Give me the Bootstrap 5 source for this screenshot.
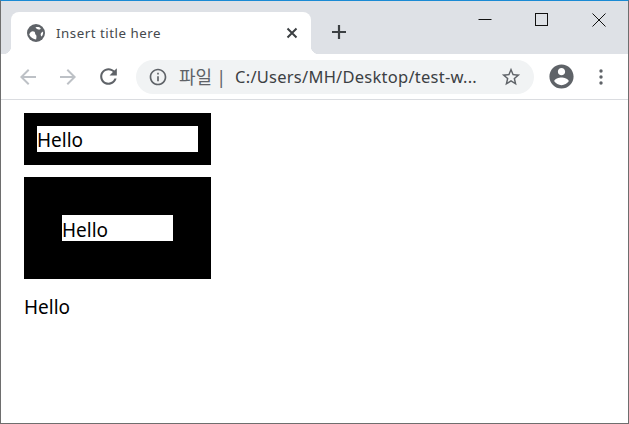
<!DOCTYPE html>
<html lang="ko">
<head>
<meta charset="utf-8">
<title>Insert title here</title>
<link href="https://cdn.jsdelivr.net/npm/bootstrap@5.3.0/dist/css/bootstrap.min.css" rel="stylesheet">
<style>
html,body{height:100%;margin:0;background:#fff;overflow:hidden}
.win-frame{width:629px;height:424px;border:1px solid #6e6e6e;border-top-color:#1a8ad4;font-family:"Noto Sans","Noto Sans CJK KR",sans-serif}
.tab-strip{height:53px;background:#dee1e6;flex:none}
.page-tab{width:300px;height:42px;margin:11px 0 0 10px;background:#fff;border-radius:8px 8px 0 0;position:relative;padding:0 13px 0 16px}
.page-tab::before,.page-tab::after{content:"";position:absolute;bottom:0;width:8px;height:8px}
.page-tab::before{left:-8px;background:radial-gradient(circle at 0 0,transparent 8px,#fff 8.5px)}
.page-tab::after{right:-8px;background:radial-gradient(circle at 100% 0,transparent 8px,#fff 8.5px)}
.tab-name{font-size:13.3px;color:#45494d;margin-left:11px;letter-spacing:.52px;line-height:16px;white-space:nowrap}
.new-tab{margin:10px 0 0 21px;height:42px}
.win-ctl{width:57px;height:24px;margin-top:7px;color:#111}
.win-ctls{margin-right:1px}
.tool-bar{height:46px;border-bottom:1px solid #dadce0;padding-left:7px;flex:none}
.tool-slot{width:40px;height:34px}
.omni{width:398px;height:34px;margin-left:8px;background:#f1f3f4;border-radius:17px;padding:0 12px;margin-top:1px}
.omni-label{font-size:18px;color:#5f6368;margin-left:11px;white-space:nowrap;line-height:20px}
.omni-sep{font-size:18px;color:#5f6368;margin:0 9px 0 4px;line-height:20px}
.omni-url{font-size:16.5px;color:#3c4043;white-space:nowrap;line-height:20px;letter-spacing:.25px}
.prof-slot{width:54px;margin-left:0}
.menu-slot{width:26px}
.page-body{padding:13px 23px;color:#000;font-size:19px;font-family:"Noto Sans",sans-serif}
.black-box{width:187px;background:#000}
.box-one{padding:13px;margin-bottom:12px}
.box-one .white-inner{line-height:28px}
.box-two{padding:38px;margin-bottom:16px}
.box-two .white-inner{line-height:30px}
.white-inner{background:#fff;height:26px}
.plain-hello{height:26px;line-height:24px}
.reload-slot{padding-left:1px}
</style>
</head>
<body>
<div class="win-frame d-flex flex-column">
  <div class="tab-strip d-flex">
    <div class="page-tab d-flex align-items-center">
      <svg width="18" height="18" viewBox="0 0 18 18"><circle cx="9" cy="9" r="9" fill="#5f6368"/><path d="M2.200 10.500C3.500 7 6 6.500 7.500 7.800c1 .9.2 2.200 1.200 3 .9.700 1 1.800.4 4.700-2.500-.3-5.800-2-6.900-5zM8.500 3.500c2-.8 4-.3 5.300.9-.5 1.100-1.800 1.300-2.400 1.100-1-.3-2.300-.8-2.900-2zM16 7.500c.4 1.500 0 3.500-1.300 5-1-.5-1.200-1.800-.9-2.700.3-1 1.300-1.800 2.200-2.300z" fill="#fff"/></svg>
      <span class="tab-name">Insert title here</span>
      <svg class="ms-auto" width="12" height="12" viewBox="0 0 12 12"><path d="M1.500 1.500l9 9M10.500 1.500l-9 9" stroke="#3c4043" stroke-width="2"/></svg>
    </div>
    <div class="new-tab d-flex align-items-center">
      <svg width="14" height="14" viewBox="0 0 14 14"><path d="M7 0v14M0 7h14" stroke="#3c4043" stroke-width="2.200"/></svg>
    </div>
    <div class="win-ctls d-flex ms-auto align-self-start">
      <div class="win-ctl d-flex align-items-center justify-content-center"><svg width="14" height="14" viewBox="0 0 14 14"><path d="M.5 6.500h13" stroke="#111" stroke-width="1"/></svg></div>
      <div class="win-ctl d-flex align-items-center justify-content-center"><svg width="14" height="14" viewBox="0 0 14 14"><rect x=".5" y=".5" width="12" height="12" fill="none" stroke="#111"/></svg></div>
      <div class="win-ctl d-flex align-items-center justify-content-center"><svg width="14" height="14" viewBox="0 0 14 14"><path d="M.5.5l13 13M13.500.5l-13 13" stroke="#111" stroke-width="1"/></svg></div>
    </div>
  </div>
  <div class="tool-bar d-flex align-items-center">
    <div class="tool-slot d-flex align-items-center justify-content-center"><svg width="24" height="24" viewBox="0 0 24 24"><path fill="#bdc1c6" d="M20 11H7.830l5.590-5.590L12 4l-8 8 8 8 1.410-1.410L7.830 13H20v-2z"/></svg></div>
    <div class="tool-slot d-flex align-items-center justify-content-center"><svg width="24" height="24" viewBox="0 0 24 24"><path fill="#bdc1c6" d="M12 4l-1.410 1.410L16.170 11H4v2h12.170l-5.580 5.590L12 20l8-8z"/></svg></div>
    <div class="tool-slot reload-slot d-flex align-items-center justify-content-center"><svg width="25" height="25" viewBox="0 0 24 24"><path fill="#5f6368" d="M17.650 6.350C16.200 4.900 14.210 4 12 4c-4.420 0-7.990 3.580-7.990 8s3.570 8 7.990 8c3.730 0 6.840-2.550 7.730-6h-2.080c-.82 2.330-3.040 4-5.650 4-3.310 0-6-2.690-6-6s2.690-6 6-6c1.660 0 3.140.69 4.220 1.780L13 11h7V4l-2.350 2.350z"/></svg></div>
    <div class="omni d-flex align-items-center">
      <svg width="20" height="20" viewBox="0 0 24 24" class="flex-shrink-0"><path fill="#5f6368" d="M11 7h2v2h-2zm0 4h2v6h-2zm1-9C6.480 2 2 6.480 2 12s4.480 10 10 10 10-4.480 10-10S17.520 2 12 2zm0 18c-4.410 0-8-3.590-8-8s3.590-8 8-8 8 3.590 8 8-3.590 8-8 8z"/></svg>
      <span class="omni-label">파일</span><span class="omni-sep">|</span><span class="omni-url">C:/Users/MH/Desktop/test-w...</span>
      <svg class="ms-auto flex-shrink-0" width="22" height="22" viewBox="0 0 24 24"><path fill="#5f6368" d="M22 9.240l-7.190-.62L12 2 9.190 8.630 2 9.240l5.460 4.730L5.820 21 12 17.270 18.180 21l-1.630-7.030L22 9.240zM12 15.400l-3.760 2.270 1-4.280-3.320-2.880 4.380-.38L12 6.100l1.710 4.040 4.380.38-3.320 2.880 1 4.280L12 15.400z"/></svg>
    </div>
    <div class="prof-slot d-flex justify-content-center"><svg width="29" height="29" viewBox="0 0 24 24"><path fill="#5f6368" d="M12 2C6.480 2 2 6.480 2 12s4.480 10 10 10 10-4.480 10-10S17.520 2 12 2zm0 3c1.660 0 3 1.340 3 3s-1.340 3-3 3-3-1.340-3-3 1.340-3 3-3zm0 14.200c-2.500 0-4.710-1.280-6-3.220.03-1.990 4-3.080 6-3.080 1.990 0 5.970 1.090 6 3.080-1.290 1.940-3.500 3.220-6 3.220z"/></svg></div>
    <div class="menu-slot d-flex justify-content-center"><svg width="4" height="16" viewBox="0 0 4 16"><circle cx="2" cy="2" r="1.700" fill="#5f6368"/><circle cx="2" cy="8" r="1.700" fill="#5f6368"/><circle cx="2" cy="14" r="1.700" fill="#5f6368"/></svg></div>
  </div>
  <div class="page-body">
    <div class="black-box box-one"><div class="white-inner">Hello</div></div>
    <div class="black-box box-two"><div class="white-inner">Hello</div></div>
    <div class="plain-hello">Hello</div>
  </div>
</div>
<script src="https://cdn.jsdelivr.net/npm/bootstrap@5.3.0/dist/js/bootstrap.bundle.min.js"></script>
</body>
</html>
